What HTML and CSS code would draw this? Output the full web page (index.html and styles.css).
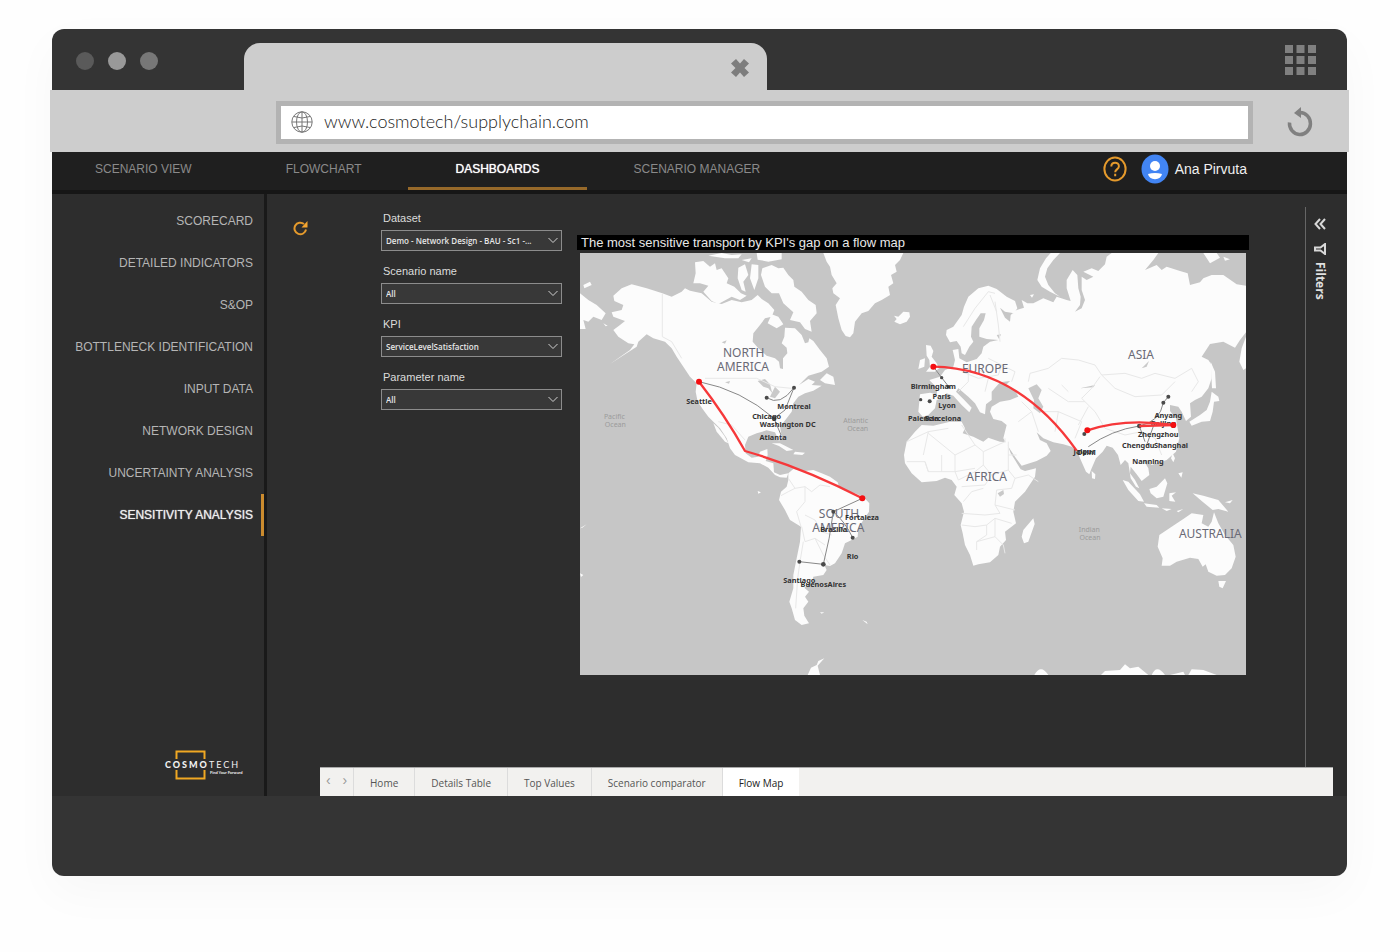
FILE: index.html
```html
<!DOCTYPE html>
<html lang="en">
<head>
<meta charset="utf-8">
<meta name="viewport" content="width=device-width, initial-scale=1">
<title>Supply chain dashboards</title>
<link rel="stylesheet" href="styles.css">
</head>
<body>
<div class="window">
  <div class="titlebar">
    <div class="dots"><span class="dot dot-dark"></span><span class="dot dot-light"></span><span class="dot"></span></div>
    <div class="browser-tab">
      <button class="icon-button" aria-label="Close tab">
        <svg width="18" height="18" viewBox="0 0 18 18"><path d="M5 0 9 4.500 13 0 18 4.500 13.500 9 18 13.500 13 18 9 13.500 5 18 0 13.500 4.500 9 0 4.500Z" fill="#7d7d7d"/></svg>
      </button>
    </div>
    <button class="icon-button apps" aria-label="Apps">
      <svg width="31" height="31" viewBox="0 0 31 31" fill="#808080"><path d="M0 0h8v8H0zM11.500 0h8v8h-8zM23 0h8v8h-8zM0 11h8v8H0zM11.500 11h8v8h-8zM23 11h8v8h-8zM0 22h8v8H0zM11.500 22h8v8h-8zM23 22h8v8h-8z"/></svg>
    </button>
  </div>

  <div class="toolbar">
    <div class="address">
      <svg width="22" height="22" viewBox="0 0 22 22" fill="none" stroke="#777" stroke-width="1"><circle cx="11" cy="11" r="10.200"/><ellipse cx="11" cy="11" rx="5.500" ry="10.200"/><path d="M11 1v20M1 11h20M3 5.500q8 3 16 0M3 16.500q8-3 16 0"/></svg>
      <input class="url" type="text" aria-label="Address" value="www.cosmotech/supplychain.com">
    </div>
    <button class="icon-button reload" aria-label="Reload">
      <svg width="26" height="30" viewBox="0 0 26 30"><path d="M2.500 15.500A10.500 11 0 1 0 13 5.500" fill="none" stroke="#808080" stroke-width="3.500"/><path d="M7 6 14 0v11z" fill="#808080"/></svg>
    </button>
  </div>

  <div class="app">
    <header class="app-header">
      <nav class="main-nav" aria-label="Main">
        <a href="#scenario">SCENARIO VIEW</a>
        <a href="#flowchart">FLOWCHART</a>
        <a href="#dashboards" class="active" aria-current="page">DASHBOARDS</a>
        <a href="#manager">SCENARIO MANAGER</a>
      </nav>
      <div class="user">
        <button class="icon-button" aria-label="Help">
          <svg width="24" height="26" viewBox="0 0 24 26" fill="none" stroke="#e59a2c" stroke-width="2"><ellipse cx="12" cy="13" rx="10.600" ry="11.400"/><path d="M8.300 10.500c0-5 7.600-5 7.600-.3 0 3-3.700 3.300-3.700 6M12.200 17.800v2.400"/></svg>
        </button>
        <svg class="avatar" width="28" height="30" viewBox="0 0 28 30"><ellipse cx="14" cy="15" rx="13.500" ry="14.500" fill="#4285f4"/><circle cx="14" cy="12" r="5" fill="#fff"/><path d="M7 20q7-2 14 0-1 5-7 5.200Q8 25 7 20Z" fill="#fff"/></svg>
        <span>Ana Pirvuta</span>
      </div>
    </header>

    <div class="app-body">
      <aside class="sidebar">
        <nav class="side-nav" aria-label="Dashboards">
          <a href="#scorecard">SCORECARD</a>
          <a href="#indicators">DETAILED INDICATORS</a>
          <a href="#sop">S&amp;OP</a>
          <a href="#bottleneck">BOTTLENECK IDENTIFICATION</a>
          <a href="#input">INPUT DATA</a>
          <a href="#network">NETWORK DESIGN</a>
          <a href="#uncertainty">UNCERTAINTY ANALYSIS</a>
          <a href="#sensitivity" class="active" aria-current="page">SENSITIVITY ANALYSIS</a>
        </nav>
        <svg class="logo" width="84" height="32" viewBox="0 0 84 32">
          <path d="M12.500 10V2.500h28V10M12.500 21v8.500h28V21" fill="none" stroke="#f0a823" stroke-width="2"/>
          <text x="1" y="19" class="logo-name"><tspan class="logo-strong">COSMO</tspan><tspan>TECH</tspan></text>
          <text x="46" y="25" class="logo-tag">Find Your Forward</text>
        </svg>
      </aside>

      <main class="main">
        <button class="icon-button refresh" aria-label="Refresh">
          <svg width="15" height="15" viewBox="0 0 15 15"><path d="M13 8.500A5.800 5.800 0 1 1 11 3" fill="none" stroke="#e59a2c" stroke-width="2"/><path d="M14.500 0v6.500H8.500z" fill="#f5a52f"/></svg>
        </button>
        <div class="report">
          <div class="report-body">
            <form class="filters">
              <div class="field">
                <label for="dataset">Dataset</label>
                <div class="select"><select id="dataset"><option>Demo - Network Design - BAU - Sc1 -...</option></select>
                <svg width="10" height="7" viewBox="0 0 10 7"><path d="M.5 1 5 5.500 9.500 1"/></svg></div>
              </div>
              <div class="field">
                <label for="scenario-name">Scenario name</label>
                <div class="select"><select id="scenario-name"><option>All</option></select>
                <svg width="10" height="7" viewBox="0 0 10 7"><path d="M.5 1 5 5.500 9.500 1"/></svg></div>
              </div>
              <div class="field">
                <label for="kpi">KPI</label>
                <div class="select"><select id="kpi"><option>ServiceLevelSatisfaction</option></select>
                <svg width="10" height="7" viewBox="0 0 10 7"><path d="M.5 1 5 5.500 9.500 1"/></svg></div>
              </div>
              <div class="field">
                <label for="parameter">Parameter name</label>
                <div class="select"><select id="parameter"><option>All</option></select>
                <svg width="10" height="7" viewBox="0 0 10 7"><path d="M.5 1 5 5.500 9.500 1"/></svg></div>
              </div>
            </form>

            <section class="visual">
              <h2>The most sensitive transport by KPI's gap on a flow map</h2>
              <svg class="map" viewBox="15 84 1998 1266" role="img" aria-label="Flow map">
                <g class="land">
                  <path d="M170 178 215 190 262 205 290 215 320 200 330 190 345 197 380 205 410 230 440 237 470 225 500 232 530 225 548 210 560 222 580 235 598 255 590 275 570 280 555 300 535 325 533 350 550 370 575 392 600 400 612 410 615 430 624 432 624 400 637 385 635 368 620 355 628 335 630 308 660 310 680 330 690 355 700 352 703 340 715 348 735 375 755 400 762 425 740 440 700 452 672 480 700 462 720 470 710 480 740 482 715 497 690 505 670 515 655 535 650 560 635 580 615 605 620 635 612 648 600 622 575 616 545 625 520 635 510 660 512 685 530 698 550 695 555 680 577 672 578 690 572 708 595 715 597 742 615 750 640 745 635 758 615 757 600 750 580 728 555 715 520 712 480 690 465 670 455 640 435 610 415 590 400 575 385 555 368 530 362 500 365 475 345 455 325 425 305 395 290 370 270 350 235 340 215 328 190 350 185 365 150 388 105 417 165 375 178 358 160 355 130 335 115 315 135 300 150 288 115 275 110 262 140 255 145 240 118 228 115 212 140 190Z"/>
                  <path d="M415 595 430 608 448 632 460 655 450 650 425 620Z"/>
                  <path d="M360 112 385 108 405 125 420 115 425 135 440 130 460 160 455 175 478 185 498 205 515 212 495 225 470 215 430 237 410 228 385 200 400 182 375 175 355 175 362 145Z"/>
                  <path d="M400 92 440 84 470 90 500 88 490 100 450 100ZM545 84H620V103L580 110 548 104ZM490 128 510 118 520 150 505 170 512 200 500 195 488 160ZM530 118 550 120 550 160 538 195 525 160ZM500 105 530 100 522 112Z"/>
                  <path d="M562 130 590 120 610 130 625 128 640 150 655 165 658 185 680 200 700 225 722 240 725 265 705 288 710 320 690 312 675 292 645 285 655 262 625 235 612 205 590 205 570 185 558 150ZM590 268 610 275 625 298 605 310 578 295ZM755 445 775 455 780 480 750 475 735 465Z"/>
                  <path d="M15 205 40 225 65 240 92 265 80 285 55 275 40 290 25 285 32 312H15ZM25 180 45 170 50 180 28 190ZM85 295 98 302 92 304Z"/>
                  <path d="M745 84H985L975 105 960 120 965 140 948 150 955 175 940 185 945 210 920 225 900 235 880 258 860 265 840 290 835 325 825 337 812 333 800 315 790 280 782 240 795 220 775 205 772 190 785 175 770 150 765 125 755 110Z"/>
                  <path d="M957 272 970 275 985 260 1003 262 1005 275 995 290 975 298 958 290 965 282Z"/>
                  <path d="M590 655 615 655 655 675 635 678 612 663ZM660 680 690 683 682 690 655 688ZM15 910 35 898 22 908ZM15 1045 25 1050 18 1056ZM735 1162 748 1162 740 1166ZM862 1185 875 1190 878 1198ZM548 798 558 802 550 806Z"/>
                  <path d="M640 745 655 732 690 738 715 735 740 745 765 755 788 772 792 785 805 795 840 805 865 815 883 835 882 860 865 885 850 910 848 935 830 945 810 955 800 985 780 1015 765 1023 748 1020 755 1035 745 1050 715 1055 710 1075 688 1088 702 1100 690 1115 700 1130 685 1150 688 1172 702 1195 680 1200 660 1185 650 1150 643 1130 655 1090 655 1050 665 1000 675 950 678 905 645 885 630 855 612 825 618 800 635 785 640 765Z"/>
                  <path d="M698 1350 708 1328 725 1320 730 1308 748 1300 728 1322 735 1350Z"/>
                </g>
                <g class="land" transform="translate(945 0)">
                  <path d="M95 600 130 602 180 590 215 590 225 610 218 625 250 635 280 650 295 638 330 650 350 652 362 685 375 705 392 733 405 738 438 730 435 755 405 800 375 830 370 860 378 895 345 920 348 945 330 965 325 990 300 1012 265 1018 250 1022 240 990 225 960 218 925 212 900 222 860 215 835 193 810 200 785 185 765 165 758 140 768 95 772 65 745 45 715 42 690 50 650 75 620ZM430 880 434 897 415 950 402 955 395 935 400 915Z"/>
                  <path d="M90 508 120 503 140 508 142 490 118 465 150 455 165 435 190 425 195 405 188 375 205 372 208 400 230 412 260 402 275 385 280 365 300 350 325 345 290 342 268 335 268 310 282 285 287 265 272 265 258 285 245 305 243 335 250 350 238 365 225 390 215 385 212 365 200 348 180 352 168 330 170 315 190 305 215 270 222 245 235 215 265 190 295 182 320 192 350 215 375 228 382 250 372 265 345 260 330 248 345 278 360 290 362 270 380 255 402 248 395 225 412 235 430 235 460 220 490 232 500 215 530 225 542 228 530 190 530 165 548 135 562 150 565 190 572 215 570 240 555 260 575 250 585 225 575 195 575 155 590 165 610 155 580 140 605 130 625 138 645 118 650 95 665 84H805L790 105 765 135 800 120 815 135 830 125 870 138 893 145 900 180 930 172 940 160 965 150 1000 150 1040 178 1068 182V322L1050 345 1035 368 1000 350 960 357 935 395 955 405 965 420 965 460 955 490 935 515 915 525 900 535 903 575 888 588 875 560 865 545 840 540 840 558 858 580 862 605 868 640 858 680 830 705 800 715 785 720 772 705 762 708 775 730 778 750 755 768 740 748 722 725 720 745 735 765 748 790 738 785 722 760 715 715 705 705 692 720 684 690 668 668 650 662 638 680 618 700 605 730 598 748 588 740 570 700 562 678 545 665 520 658 490 652 460 640 440 622 450 645 470 655 482 678 470 692 440 708 395 722 378 700 355 665 340 640 350 600 335 588 310 582 300 560 305 545 330 530 360 525 385 515 375 495 348 480 360 468 330 472 305 500 305 525 288 538 285 568 270 562 255 535 235 515 205 490 198 500 220 522 245 548 238 562 215 540 190 512 170 505 155 520 140 525 135 550 115 570 98 575 85 560Z"/>
                  <path d="M108 360 122 362 130 378 125 395 140 415 147 430 135 440 108 440 120 425 118 405 110 392ZM90 405 105 400 103 425 85 432ZM510 84 490 105 472 130 465 155 475 180 495 205 510 215 480 200 455 185 442 165 450 130 468 100 482 84Z"/>
                  <path d="M965 500 985 515 988 528 972 530 968 560 960 588 935 590 905 602 898 590 930 570 950 555 960 530ZM962 410 975 440 978 490 966 490ZM1068 335 1055 370 1048 410 1060 435 1068 430ZM940 84H980L990 98 960 115ZM1000 95 1020 103 1005 107ZM605 738 616 748 615 762 606 760Z"/>
                  <path d="M698 765 715 770 750 808 762 830 745 828 715 795ZM762 835 800 840 808 848 770 845ZM778 792 800 785 825 760 832 775 820 815 800 820 782 805ZM838 805 858 802 845 812 856 830 838 828ZM908 805 940 812 985 825 1015 860 985 852 968 855 935 828ZM848 685 855 700 850 712 843 700ZM865 745 878 742 874 758ZM815 850 845 852 830 858ZM860 858 880 852 865 862ZM1005 832 1028 825 1020 835ZM775 675 788 678 780 686ZM420 210 432 208 426 218Z"/>
                  <path d="M905 865 940 870 935 895 955 905 965 890 972 862 985 895 1005 930 1030 960 1037 995 1025 1030 1005 1050 980 1052 955 1040 947 1018 938 1025 925 1002 900 998 860 1010 840 1022 815 1022 818 1000 803 965 808 930 845 905 880 882ZM985 1068 1008 1068 998 1090 988 1085Z"/>
                  <path d="M433 1350Q452 1315 475 1350ZM633 1350 645 1338 690 1335 705 1318 720 1330 745 1325 775 1350ZM785 1350Q800 1315 825 1350ZM895 1350 905 1333 940 1335 980 1350ZM840 1350 880 1340 885 1350Z"/>
                </g>
                <g class="water">
                  <path d="M548 468 570 462 585 478 592 505 580 490 565 485ZM585 515 600 485 615 500 600 520ZM440 352 455 346 450 356ZM450 472 465 468 462 476ZM1360 490 1385 478 1400 495 1390 520 1405 545 1395 565 1375 550 1377 525ZM1268 805 1285 795 1287 807 1275 815ZM1265 330 1278 328 1272 342ZM1515 490 1560 480 1555 487ZM1700 430 1722 408 1715 425Z"/>
                </g>
                <g class="borders">
                  <path d="M262 205V335L290 350 320 400M390 460H545L600 485 650 490M430 590 470 600 510 645M640 760 660 790 640 800 618 812M660 790 690 785 710 800 735 780 765 785M690 785V830L665 860 678 905M690 870 720 885 740 920 770 930M680 905 690 950 720 940 750 960M685 950 675 1010 668 1060 662 1150M720 940 745 990 765 1020"/>
                  <path d="M995 650 1060 620 1120 610M1060 620 1045 690M1060 625 1140 690 1200 660 1160 600M1200 660 1225 680 1290 650V640M1225 680V720L1250 750 1300 735V650M1300 690H1325M995 710H1050L1060 740H1140L1150 765M1050 710 1060 740M1100 690V740M1140 690V740L1200 730M1150 765 1200 740 1225 720M1250 750 1230 780 1160 785M1300 735 1320 760 1360 750 1390 770M1320 760 1310 790 1265 795 1260 840 1275 865 1230 870 1160 865M1225 790 1190 800 1165 830M1160 900 1200 905 1235 900 1260 880 1310 895M1235 900V930L1205 950V975M1205 950 1260 935 1285 960 1290 985M1260 880V935M1260 840 1320 855"/>
                  <path d="M1165 305 1200 250 1240 200 1260 205M1245 210 1265 260M1275 350 1270 300 1260 230M1240 400 1280 420 1270 450 1210 460 1160 440M1180 420V470L1150 500M1210 430 1240 460 1230 500M1280 420 1320 440 1310 470M1360 470 1365 445 1420 430 1460 400 1510 405 1560 420 1580 450 1650 445 1700 460 1740 445 1800 460 1850 430 1870 470 1850 500M1575 455 1550 490 1520 520 1560 560 1590 610 1650 630 1700 620 1740 640 1760 690M1580 450 1620 490 1680 515 1760 510 1800 470M1420 490 1480 530 1530 530M1400 560 1450 560 1520 590 1500 640M1450 560 1440 620M1340 530 1370 560 1330 590M1370 560 1390 620M1460 480 1480 500M1540 545 1510 600"/>
                </g>
                <g class="places">
                  <text x="506" y="397">NORTH</text><text x="504" y="439">AMERICA</text>
                  <text x="792" y="880">SOUTH</text><text x="790" y="922">AMERICA</text>
                  <text x="1230" y="445">EUROPE</text><text x="1698" y="403">ASIA</text>
                  <text x="1235" y="767">AFRICA</text><text x="1906" y="940">AUSTRALIA</text>
                </g>
                <g class="oceans">
                  <text x="118" y="582">Pacific</text><text x="121" y="606">Ocean</text>
                  <text x="842" y="594">Atlantic</text><text x="848" y="618">Ocean</text>
                  <text x="1543" y="921">Indian</text><text x="1545" y="945">Ocean</text>
                </g>
                <g class="links">
                  <path d="M372 470Q500 495 597 580M575 518Q615 545 657 488L630 555 597 580 618 630M862 820 775 860Q765 940 745 1018L673 1010M775 860Q810 890 833 938M1075 425 1100 458 1125 490M1540 665Q1610 615 1693 603M1693 603Q1755 590 1765 533L1780 515M1740 590 1715 660M1693 603 1710 650"/>
                </g>
                <g class="stops">
                  <circle cx="575" cy="518" r="6"/><circle cx="657" cy="488" r="6"/><circle cx="597" cy="580" r="7"/>
                  <circle cx="775" cy="860" r="6"/><circle cx="833" cy="938" r="6"/><circle cx="745" cy="1018" r="7"/><circle cx="673" cy="1010" r="6"/>
                  <circle cx="1100" cy="458" r="5"/><circle cx="1120" cy="485" r="5"/><circle cx="1037" cy="524" r="5"/><circle cx="1064" cy="529" r="6"/>
                  <circle cx="1780" cy="515" r="6"/><circle cx="1765" cy="533" r="6"/><circle cx="1693" cy="603" r="7"/><circle cx="1528" cy="627" r="6"/>
                </g>
                <g class="cities">
                  <text x="372" y="537">Seattle</text><text x="657" y="552">Montreal</text><text x="575" y="582">Chicago</text>
                  <text x="638" y="605">Washington DC</text><text x="594" y="646">Atlanta</text>
                  <text x="861" y="884">Fortaleza</text><text x="776" y="922">Brasilia</text><text x="833" y="1002">Rio</text>
                  <text x="673" y="1073">Santiago</text><text x="745" y="1085">BuenosAires</text>
                  <text x="1075" y="492">Birmingham</text><text x="1100" y="523">Paris</text><text x="1116" y="550">Lyon</text>
                  <text x="1045" y="587">Palencia</text><text x="1104" y="587">Barcelona</text>
                  <text x="1780" y="580">Anyang</text><text x="1765" y="602">Beijing</text><text x="1750" y="637">Zhengzhou</text>
                  <text x="1690" y="668">Chengdu</text><text x="1788" y="668">Shanghai</text><text x="1719" y="718">Nanning</text>
                  <text x="1528" y="687">Jaipur</text><text x="1534" y="689">Delhi</text>
                </g>
                <g class="flows">
                  <path d="M372 470Q450 570 510 678 690 730 862 820M1075 425Q1330 430 1505 677M1537 616Q1650 578 1795 600M1693 603 1795 600"/>
                  <circle cx="372" cy="470" r="9"/><circle cx="862" cy="820" r="9"/><circle cx="1075" cy="425" r="9"/><circle cx="1537" cy="616" r="9"/><circle cx="1795" cy="600" r="9"/>
                </g>
              </svg>
            </section>

            <aside class="rail">
              <button class="icon-button" aria-label="Expand filters"><svg width="12" height="12" viewBox="0 0 12 12" fill="none" stroke="#d8d8d8" stroke-width="2"><path d="M6 1 1.500 6 6 11M11 1 6.500 6 11 11"/></svg></button>
              <svg width="12" height="12" viewBox="0 0 12 12" fill="none" stroke="#d8d8d8" stroke-width="2"><path d="M11 1v10L6.500 7.500H1v-3h5.500Z"/></svg>
              <span>Filters</span>
            </aside>
          </div>

          <nav class="pages" aria-label="Report pages">
            <div class="pager"><button aria-label="Previous page">‹</button><button aria-label="Next page">›</button></div>
            <a href="#home">Home</a>
            <a href="#details">Details Table</a>
            <a href="#top">Top Values</a>
            <a href="#comparator">Scenario comparator</a>
            <a href="#map" class="active" aria-current="page">Flow Map</a>
          </nav>
        </div>
      </main>
    </div>
  </div>
  <div class="window-foot"></div>
</div>
</body>
</html>
```

FILE: styles.css
```css
* { box-sizing: border-box; }

body {
  margin: 0;
  padding: 29px 53px 76px 52px;
  background: #fefefe;
  font-family: "Liberation Sans", Arial, sans-serif;
  font-size: 12px;
}

a { color: inherit; text-decoration: none; }
h2 { margin: 0; font-weight: 400; }
svg { display: block; flex: none; }

.icon-button {
  display: block;
  padding: 0;
  border: 0;
  background: none;
  cursor: pointer;
}

.window {
  border-radius: 12px;
  background: #343434;
  box-shadow: 0 16px 48px rgba(0, 0, 0, 0.03);
}

/* Browser frame */
.titlebar {
  display: flex;
  align-items: flex-end;
  height: 61px;
}
.dots {
  display: flex;
  gap: 14px;
  width: 192px;
  padding: 0 0 20px 24px;
}
.dot { width: 18px; height: 18px; border-radius: 50%; background: #777; }
.dot-dark { background: #5a5a5a; }
.dot-light { background: #999; }
.browser-tab {
  display: flex;
  align-items: center;
  justify-content: flex-end;
  width: 523px;
  height: 47px;
  padding: 2px 18px 0 0;
  border-radius: 16px 16px 0 0;
  background: #cdcdcd;
}
.apps { margin: 0 31px 14px auto; }

.toolbar {
  display: flex;
  align-items: center;
  height: 62px;
  margin: 0 -2px;
  padding: 2px 36px 0 226px;
  background: #cdcdcd;
}
.address {
  display: flex;
  flex: 1;
  align-items: center;
  gap: 11px;
  height: 43px;
  padding: 0 10px;
  border: 5px solid #b3b3b3;
  background: #fff;
}
.url {
  flex: 1;
  min-width: 0;
  padding: 0 0 2px;
  border: 0;
  outline: 0;
  background: none;
  color: #222;
  font: 300 18px/24px Lato, sans-serif;
}
.reload { margin-left: 34px; }

/* Application */
.app { background: #2d2d2d; }
.app-header {
  display: flex;
  align-items: stretch;
  justify-content: space-between;
  height: 42px;
  border-bottom: 4px solid #161616;
  background: #1f1f1f;
}
.main-nav { display: flex; color: #8a8a8a; }
.main-nav a {
  padding: 9px 47px 0;
  border-bottom: 3px solid transparent;
  line-height: 16px;
}
.main-nav a:first-child { padding-left: 43px; }
.main-nav .active {
  border-color: #96692a;
  color: #fff;
  text-shadow: 0 0 1px #fff;
}
.user {
  display: flex;
  align-items: center;
  padding: 0 100px 4px 0;
  color: #f0f0f0;
  font-size: 14px;
}
.avatar { margin: 0 6px 0 14px; }

.app-body { display: flex; }
.sidebar {
  display: flex;
  flex-direction: column;
  justify-content: space-between;
  width: 215px;
  padding-top: 6px;
  border-right: 3px solid #191919;
}
.side-nav { color: #b5b5b5; text-align: right; }
.side-nav a {
  display: block;
  padding-right: 8px;
  border-right: 3px solid transparent;
  line-height: 42px;
}
.side-nav .active {
  border-color: #cb8b2e;
  color: #eee;
  text-shadow: 0 0 1px #ddd;
}
.logo { margin: 0 0 15px 112px; }
.logo text { fill: #f2f2f2; font-family: Lato, sans-serif; }
.logo .logo-name { font-size: 9px; letter-spacing: 2px; }
.logo .logo-strong { font-weight: 900; }
.logo .logo-tag { font-size: 4px; font-weight: 700; }

.main { display: flex; flex: 1; min-width: 0; }
.refresh { width: 53px; height: 15px; margin-top: 27px; padding-left: 26px; }
.report { flex: 1; min-width: 0; margin-right: 14px; }
.report-body { display: flex; padding: 13px 0 0 61px; }

.filters {
  display: flex;
  flex-direction: column;
  gap: 12px;
  width: 181px;
  padding-top: 3px;
}
.field { display: grid; gap: 4px; }
.field label {
  padding-left: 2px;
  color: #dcdcdc;
  font-size: 11px;
  line-height: 16px;
}
.select { display: grid; align-items: center; }
.select select,
.select svg { grid-area: 1 / 1; }
.select select {
  width: 100%;
  height: 21px;
  padding: 0 14px 0 4px;
  border: 1px solid #8c8c8c;
  border-radius: 0;
  appearance: none;
  background: #383838;
  color: #e6e6e6;
  font: 600 8px "Open Sans", sans-serif;
}
.select svg {
  justify-self: end;
  margin-right: 4px;
  pointer-events: none;
  fill: none;
  stroke: #d0d0d0;
}

.visual { flex: 1; min-width: 0; margin: 28px 56px 92px 15px; }
.visual h2 {
  padding-left: 4px;
  background: #000;
  color: #e8e8e8;
  font-size: 13px;
  line-height: 15px;
}
.map {
  width: calc(100% - 6px);
  height: auto;
  margin: 3px 3px 0;
  background: #c6c6c6;
}
.land path { fill: #fcfcfc; }
.water path { fill: #c9c9c9; }
.borders path { fill: none; stroke: #e8e8e8; stroke-width: 3; }
.map text { text-anchor: middle; font-family: "Noto Sans", sans-serif; }
.places text { fill: #6a6a76; font-size: 36px; }
.oceans text { fill: #9b9b9b; font-size: 21px; }
.cities text { fill: #333; font-size: 22px; font-weight: 700; }
.links path { fill: none; stroke: #888; stroke-width: 3; }
.stops circle { fill: #4a4a4a; }
.flows path { fill: none; stroke: #f6383a; stroke-width: 7; stroke-linejoin: round; }
.flows circle { fill: #f40f12; }

.rail {
  display: flex;
  flex-direction: column;
  align-items: center;
  gap: 13px;
  width: 28px;
  padding-top: 11px;
  border-left: 1px solid #666;
}
.rail span {
  margin-top: -6px;
  color: #e0e0e0;
  font: 700 12px/14px "Open Sans", sans-serif;
  writing-mode: vertical-rl;
}

.pages {
  display: flex;
  height: 29px;
  border-top: 1px solid #aaa;
  background: #f2f1ef;
  color: #555;
  font: 10px/30px "Open Sans", sans-serif;
}
.pages a { padding: 0 16px; border-left: 1px solid #dcdcdc; }
.pages .active { background: #fff; color: #222; }
.pager { display: flex; width: 33px; }
.pager button {
  flex: 1;
  padding: 0 0 4px;
  border: 0;
  background: none;
  color: #999;
  font-size: 14px;
}

.window-foot { height: 80px; }
```
